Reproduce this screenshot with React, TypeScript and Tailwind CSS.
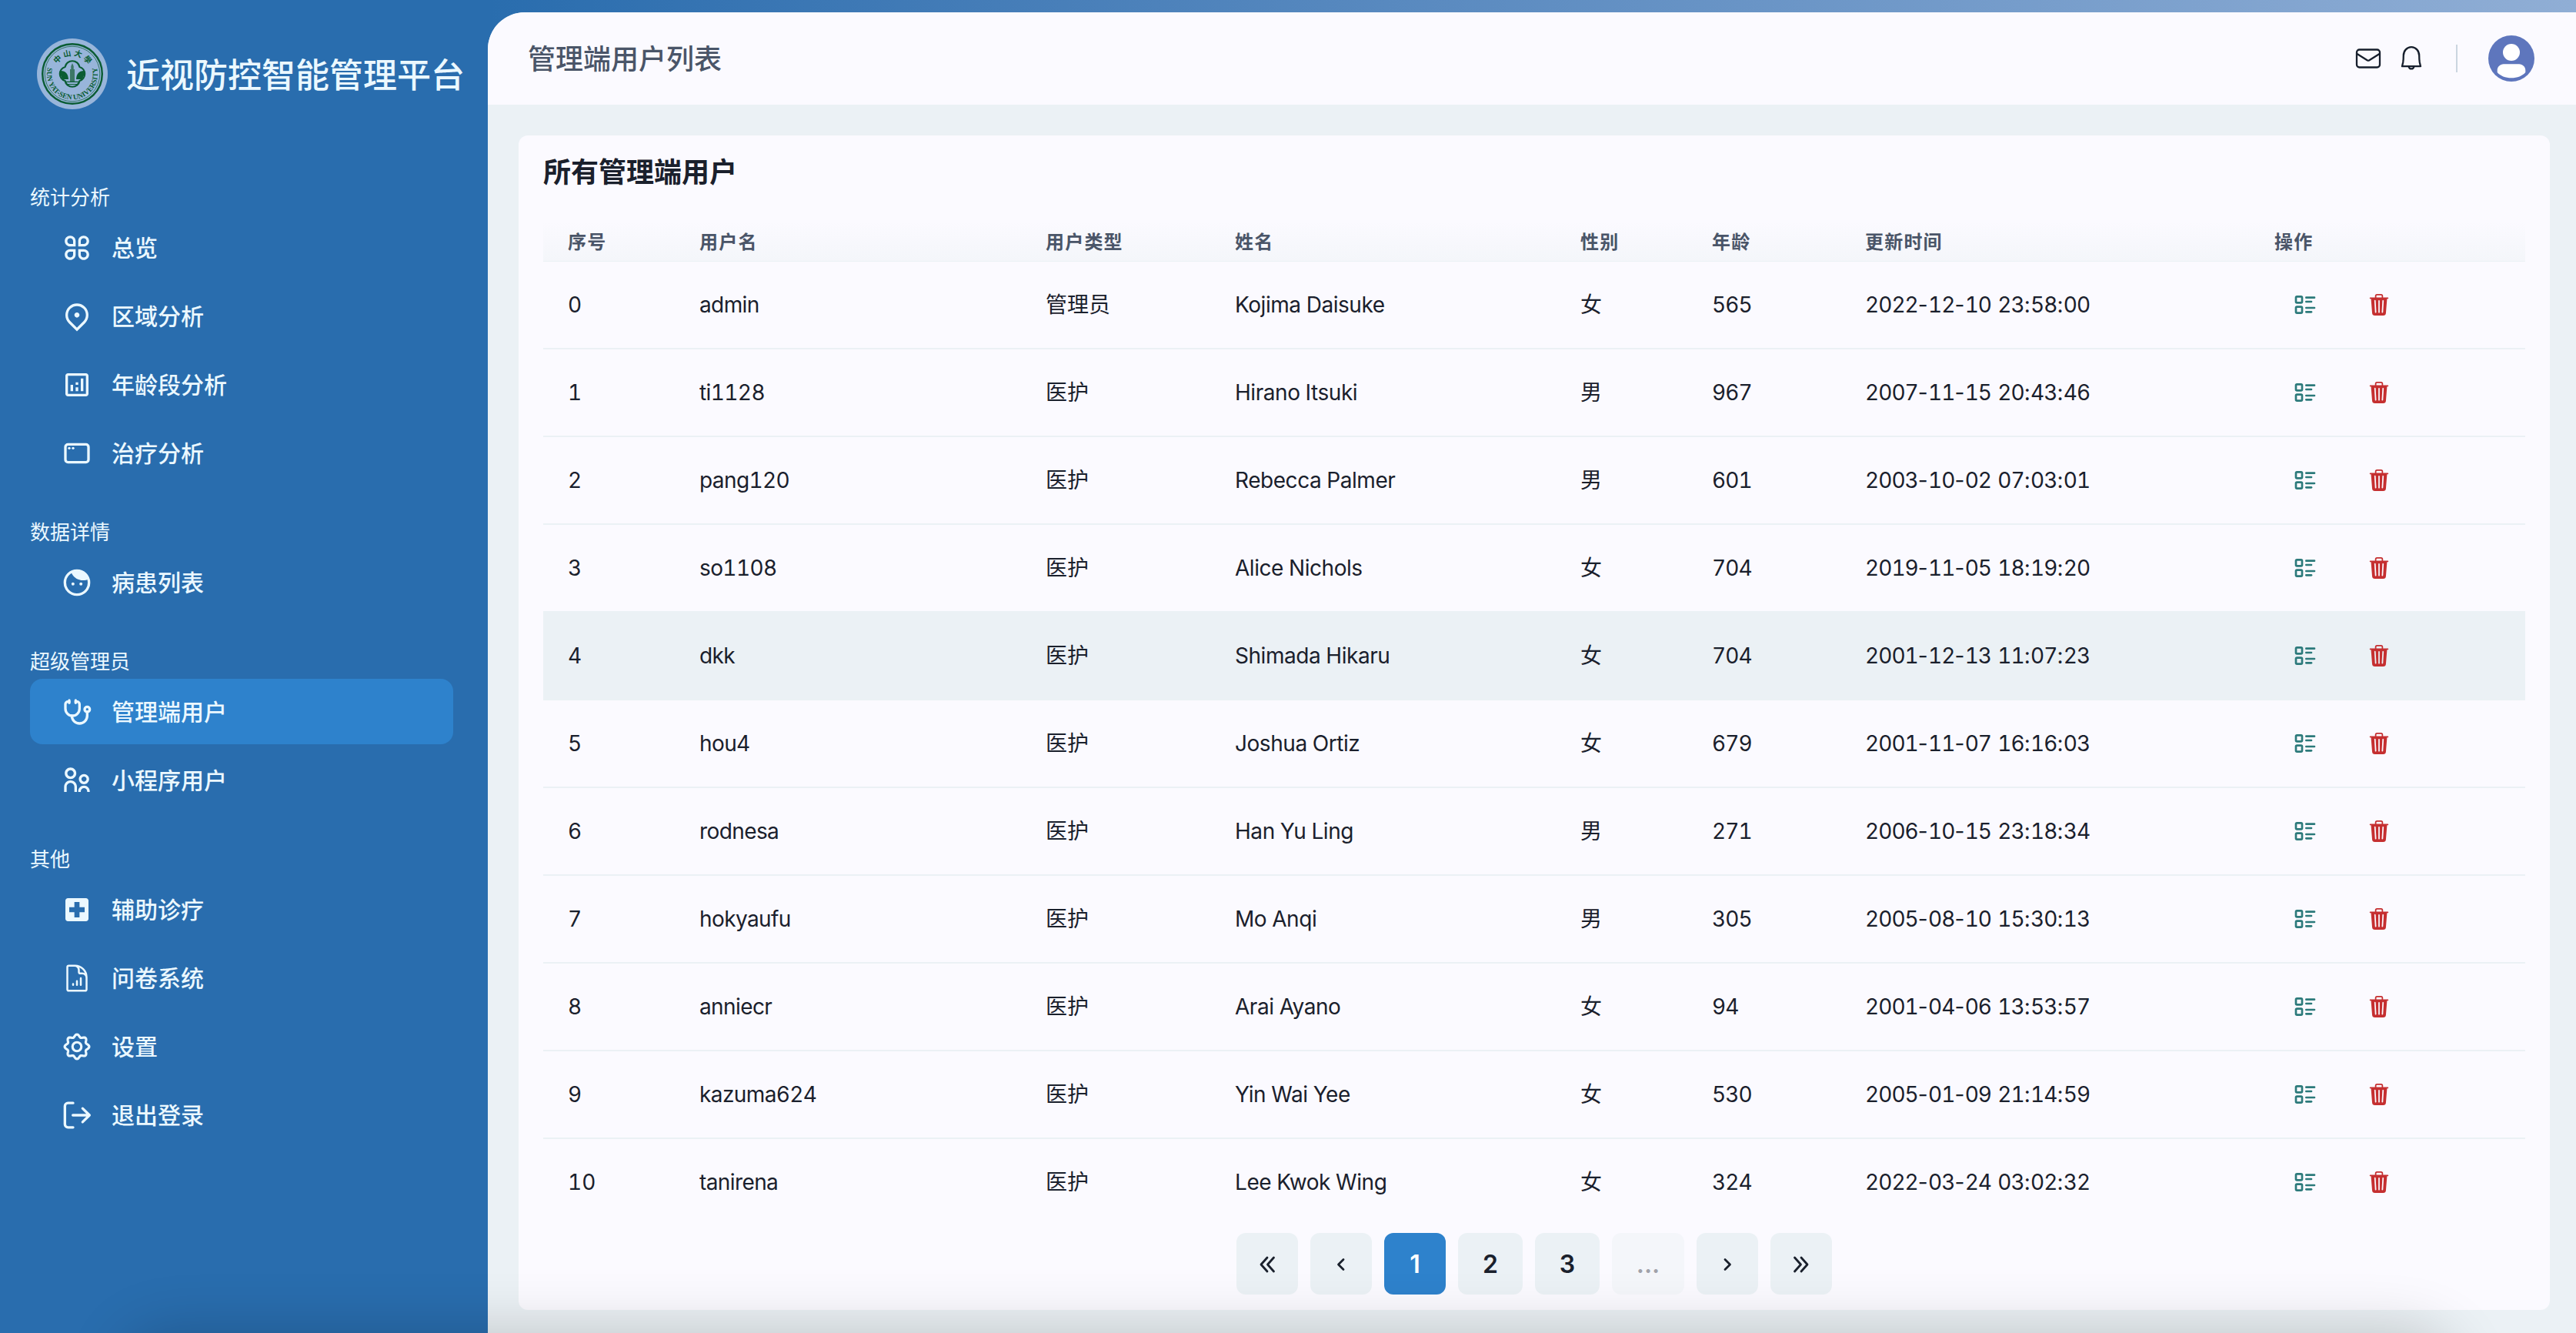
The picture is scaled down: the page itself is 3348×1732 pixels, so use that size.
import type { ReactNode } from "react";
import { RiAppsLine, RiMapPin2Line, RiParentLine } from "react-icons/ri";
import { MdLocalHospital, MdOutlineAnalytics } from "react-icons/md";
import { TbAppWindow, TbListDetails, TbStethoscope } from "react-icons/tb";
import { HiOutlineDocumentChartBar } from "react-icons/hi2";
import { BsTrash3Fill } from "react-icons/bs";

type IconProps = { size?: number };

function Logo() {
  const green = "#0a5c33";
  return (
    <svg width="92" height="92" viewBox="0 0 92 92" className="shrink-0">
      <defs>
        <path id="logo-top" d="M22.500 46a23.500 23.500 0 0 1 47 0" />
        <path id="logo-bottom" d="M15 35a33 33 0 1 0 62 0" />
      </defs>
      <circle cx="46" cy="46" r="46" fill="#98b5da" />
      <circle cx="46" cy="46" r="38.800" fill="none" stroke={green} strokeWidth="2.400" />
      <circle cx="46" cy="46" r="35.800" fill="none" stroke={green} strokeWidth="0.700" />
      <text fill={green} fontSize="10" fontWeight="700" letterSpacing="2.600" fontFamily="'Noto Sans CJK TC', sans-serif" textAnchor="middle">
        <textPath href="#logo-top" startOffset="52%">中山大學</textPath>
      </text>
      <text fill={green} fontSize="9.500" fontWeight="700" fontFamily="'Liberation Serif', serif" textLength="121" lengthAdjust="spacingAndGlyphs" textAnchor="middle">
        <textPath href="#logo-bottom" startOffset="50%">SUN YAT-SEN UNIVERSITY</textPath>
      </text>
      <path
        d="M36.500 37a9.700 9.700 0 0 1 19 0a9.400 9.400 0 0 1 0 18a9.700 9.700 0 0 1 -19 0a9.400 9.400 0 0 1 0 -18z"
        fill="none"
        stroke={green}
        strokeWidth="2.200"
      />
      <path d="M44.300 36l1.700-4 1.700 4v4h1.300v16h-6V40h1.300z" fill="#3d7766" />
      <path d="M31 42c6.500 0 9.500 4 10 11h-7.500c-2.500-3-3.500-7-2.500-11zM61 42c-6.500 0-9.500 4-10 11h7.500c2.500-3 3.500-7 2.500-11z" fill={green} />
      <path d="M37 56.300h18M39.500 59.500h13" stroke={green} strokeWidth="1.200" />
    </svg>
  );
}

function LogoutIcon({ size }: IconProps) {
  return (
    <svg width={size} height={size} viewBox="0 0 24 24" fill="none" stroke="currentColor" strokeWidth="2" strokeLinecap="round" strokeLinejoin="round">
      <path d="M9 2.500H5A2.400 2.400 0 0 0 2.600 4.900v14.200A2.400 2.400 0 0 0 5 21.500h4" />
      <path d="M8.800 12h13M16.400 6.700l5.400 5.300-5.400 5.300" />
    </svg>
  );
}

function FaceIcon({ size }: IconProps) {
  return (
    <svg width={size} height={size} viewBox="0 0 24 24">
      <circle cx="12" cy="12" r="9.400" fill="none" stroke="currentColor" strokeWidth="2" />
      <path d="M7.600 4C9 7.800 12.700 10.200 16.800 10.200c1.500 0 3-.300 4.300-.800A9.600 9.600 0 0 0 7.600 4z" fill="currentColor" />
      <circle cx="8.900" cy="13" r="1.200" fill="currentColor" />
      <circle cx="15.100" cy="13" r="1.200" fill="currentColor" />
    </svg>
  );
}

// Eight-lobed gear outline, sampled from a cosine-modulated circle.
const gearPath =
  Array.from({ length: 144 }, (_, i) => {
    const t = (i / 144) * Math.PI * 2;
    const r = 8.55 + 1 * Math.cos(8 * t);
    return `${i ? "L" : "M"}${(12 + r * Math.cos(t)).toFixed(2)} ${(12 + r * Math.sin(t)).toFixed(2)}`;
  }).join("") + "Z";

function GearIcon({ size }: IconProps) {
  return (
    <svg width={size} height={size} viewBox="0 0 24 24" fill="none" stroke="currentColor" strokeWidth="1.900" strokeLinejoin="round">
      <path d={gearPath} />
      <circle cx="12" cy="12" r="3.450" />
    </svg>
  );
}

function MailIcon() {
  return (
    <svg width="40" height="40" viewBox="0 0 40 40" fill="none" stroke="#171f2d" strokeWidth="2.300" strokeLinejoin="round">
      <rect x="5" y="8.500" width="30" height="23" rx="3.500" />
      <path d="M5.500 14L18.600 22.200a2.800 2.800 0 0 0 2.800 0L34.500 14" />
    </svg>
  );
}

function BellIcon() {
  return (
    <svg width="40" height="40" viewBox="0 0 40 40" fill="none" stroke="#171f2d" strokeWidth="2.300" strokeLinejoin="round" strokeLinecap="round">
      <path d="M8 30.200h24l-1.200-5.200c-.5-2.500-.6-5-.6-8.700C30.200 10 25.700 5.200 20 5.200S9.800 10 9.800 16.300c0 3.700-.1 6.200-.6 8.700z" />
      <path d="M16.700 30.700a3.400 3.600 0 0 0 6.600 0" />
    </svg>
  );
}

function Avatar() {
  return (
    <svg width="60" height="60" viewBox="0 0 60 60">
      <circle cx="30" cy="30" r="30" fill="#5e76bd" />
      <circle cx="30" cy="22" r="11" fill="#fff" />
      <path d="M20 37.300h20c4.700 0 8.300 3.700 8.300 8v2.600C44.500 52.500 37.500 55.200 30 55.200S15.500 52.500 11.700 47.900v-2.600c0-4.300 3.600-8 8.300-8z" fill="#fff" />
    </svg>
  );
}

function Chevron({ double, right }: { double?: boolean; right?: boolean }) {
  return (
    <svg
      width="32"
      height="32"
      viewBox="0 0 32 32"
      fill="none"
      stroke="#1a202c"
      strokeWidth="2.800"
      strokeLinecap="round"
      strokeLinejoin="round"
      className={right ? "rotate-180" : undefined}
    >
      {double ? <path d="M16 7l-8 9 8 9M24.500 7l-8 9 8 9" /> : <path d="M19 9.500L12.500 16l6.500 6.500" />}
    </svg>
  );
}

type Item = { label: string; icon: (props: IconProps) => ReactNode; active?: boolean };

const sections: { title: string; items: Item[] }[] = [
  {
    title: "统计分析",
    items: [
      { label: "总览", icon: RiAppsLine },
      { label: "区域分析", icon: RiMapPin2Line },
      { label: "年龄段分析", icon: MdOutlineAnalytics },
      { label: "治疗分析", icon: TbAppWindow },
    ],
  },
  { title: "数据详情", items: [{ label: "病患列表", icon: FaceIcon }] },
  {
    title: "超级管理员",
    items: [
      { label: "管理端用户", icon: TbStethoscope, active: true },
      { label: "小程序用户", icon: RiParentLine },
    ],
  },
  {
    title: "其他",
    items: [
      { label: "辅助诊疗", icon: MdLocalHospital },
      { label: "问卷系统", icon: HiOutlineDocumentChartBar },
      { label: "设置", icon: GearIcon },
      { label: "退出登录", icon: LogoutIcon },
    ],
  },
];

const headers = ["序号", "用户名", "用户类型", "姓名", "性别", "年龄", "更新时间", "操作"];

const rows = [
  ["0", "admin", "管理员", "Kojima Daisuke", "女", "565", "2022-12-10 23:58:00"],
  ["1", "ti1128", "医护", "Hirano Itsuki", "男", "967", "2007-11-15 20:43:46"],
  ["2", "pang120", "医护", "Rebecca Palmer", "男", "601", "2003-10-02 07:03:01"],
  ["3", "so1108", "医护", "Alice Nichols", "女", "704", "2019-11-05 18:19:20"],
  ["4", "dkk", "医护", "Shimada Hikaru", "女", "704", "2001-12-13 11:07:23"],
  ["5", "hou4", "医护", "Joshua Ortiz", "女", "679", "2001-11-07 16:16:03"],
  ["6", "rodnesa", "医护", "Han Yu Ling", "男", "271", "2006-10-15 23:18:34"],
  ["7", "hokyaufu", "医护", "Mo Anqi", "男", "305", "2005-08-10 15:30:13"],
  ["8", "anniecr", "医护", "Arai Ayano", "女", "94", "2001-04-06 13:53:57"],
  ["9", "kazuma624", "医护", "Yin Wai Yee", "女", "530", "2005-01-09 21:14:59"],
  ["10", "tanirena", "医护", "Lee Kwok Wing", "女", "324", "2022-03-24 03:02:32"],
];

const cellTracking = ["", "tracking-[-0.6px]", "", "tracking-[-0.45px]", "", "tracking-[-0.9px]", "tracking-[-0.95px]"];

const columns = "grid grid-cols-[171px_450px_246px_449px_171px_199px_532px_1fr] pl-8";

// Digits share one width; the separators keep their natural, narrower one.
function Timestamp({ value }: { value: string }) {
  return (
    <>
      {value.split(/([-: ])/).map((part, i) =>
        i % 2 ? (
          <span key={i} className="normal-nums tracking-[0.3px]">{part}</span>
        ) : (
          part
        )
      )}
    </>
  );
}

function PageButton({ children, className = "w-20 bg-[#ebf1f5] text-[#1a202c]" }: { children: ReactNode; className?: string }) {
  return (
    <button className={`flex h-20 items-center justify-center rounded-xl pt-px text-[32px] font-semibold ${className}`}>
      {children}
    </button>
  );
}

export default function App() {
  return (
    <div className="relative flex h-[1732px] w-[3348px] overflow-hidden bg-[#296dae] font-['Inter','Noto_Sans_CJK_SC',sans-serif] text-[#1a202c]">
      <aside className="flex w-[634px] shrink-0 flex-col pt-[50px] text-[#ebf8ff]">
        <div className="flex h-[92px] items-center gap-6 pl-12">
          <Logo />
          <h1 className="whitespace-nowrap pt-[3px] text-[44px] leading-[66px] font-medium">近视防控智能管理平台</h1>
        </div>
        <nav className="mt-[94px] flex w-[589px] flex-col gap-10 pl-[39px]">
          {sections.map((section) => (
            <div key={section.title} className="flex flex-col gap-1">
              <div className="h-[39px] pt-px text-[26px] leading-[39px]">{section.title}</div>
              {section.items.map(({ label, icon: Icon, active }) => (
                <div
                  key={label}
                  className={`flex h-[85px] items-center gap-[25px] rounded-2xl pl-[41px] text-[30px] font-medium ${active ? "bg-[#2e82cc]" : ""}`}
                >
                  <Icon size={40} />
                  <span className="pt-0.5">{label}</span>
                </div>
              ))}
            </div>
          ))}
        </nav>
      </aside>

      <div className="flex flex-1 flex-col bg-linear-to-r from-[#296dae] to-[#90aed5] pt-4">
        <main className="flex flex-1 flex-col overflow-hidden rounded-tl-[48px] bg-[#ebf1f5]">
          <header className="flex h-[120px] shrink-0 items-center bg-[#fbfaff] pr-[54px] pl-[52px]">
            <h2 className="flex-1 pt-0.5 text-[36px] font-medium text-[#4a5568]">管理端用户列表</h2>
            <div className="flex items-center gap-4">
              <MailIcon />
              <BellIcon />
            </div>
            <div className="mr-10 ml-[38px] h-9 w-0.5 bg-[#cbd5e0]" />
            <Avatar />
          </header>

          <section className="mt-10 mr-[34px] ml-10 flex h-[1526px] flex-col rounded-xl bg-[#fbfaff] px-8">
            <h3 className="mt-[21px] text-[36px] leading-[54px] font-bold">所有管理端用户</h3>
            <div className={`${columns} mt-[37px] h-[52px] items-center border-b border-[#ebf1f5] bg-linear-to-b from-[#fbfaff] to-[#f4f6fa] pt-0.5 text-2xl font-semibold tracking-[0.05em] text-[#4a5568]`}>
              {headers.map((h) => (
                <div key={h}>{h}</div>
              ))}
            </div>
            {rows.map((row, i) => (
              <div
                key={row[0]}
                className={`${columns} h-[114px] items-center text-[28px] tabular-nums ${i < rows.length - 1 ? "border-b-2 border-[#ebf1f5]" : "pb-0.5"} ${i === 4 ? "bg-[#ebf1f5]" : ""}`}
              >
                {row.map((cell, c) => (
                  <div key={c} className={cellTracking[c]}>{c === 6 ? <Timestamp value={cell} /> : cell}</div>
                ))}
                <div className="flex gap-4">
                  <button className="flex w-20 justify-center text-[#2c7a7b]">
                    <TbListDetails size={32} />
                  </button>
                  <button className="flex w-20 items-center justify-center text-[#c52f30]">
                    <BsTrash3Fill size={28} />
                  </button>
                </div>
              </div>
            ))}
            <div className="mt-2 flex justify-center gap-4">
              <PageButton><Chevron double /></PageButton>
              <PageButton><Chevron /></PageButton>
              <PageButton className="w-20 bg-[#2e82cc] text-white">1</PageButton>
              <PageButton className="w-[84px] bg-[#ebf1f5] text-[#1a202c]">2</PageButton>
              <PageButton className="w-[84px] bg-[#ebf1f5] text-[#1a202c]">3</PageButton>
              <PageButton className="w-[94px] bg-[#ebf1f5] text-[#1a202c] opacity-40">...</PageButton>
              <PageButton><Chevron right /></PageButton>
              <PageButton><Chevron double right /></PageButton>
            </div>
          </section>
        </main>
      </div>

      {/* soft shade cast upward from below the page */}
      <div className="pointer-events-none absolute top-full right-40 left-40 h-40 rounded-[60px] shadow-[0_0_80px_rgba(0,0,0,0.2)]" />
    </div>
  );
}
